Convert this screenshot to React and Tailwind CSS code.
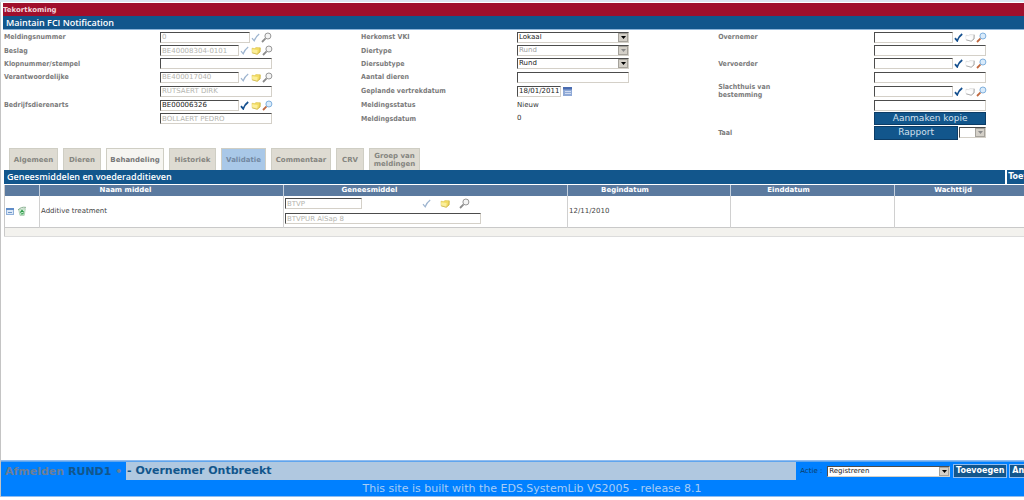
import { useState } from "react";

const ROWS = "grid grid-cols-[156px_1fr] grid-rows-[14px_13px_13px_14px_14px_14px_13px_15px] items-center";
const FIELD =
  "h-[11px] border border-t-[#4c4c4c] border-l-[#4c4c4c] border-r-[#d4d0c8] border-b-[#d4d0c8] bg-white px-px font-[Verdana,'DejaVu_Sans',sans-serif] text-[7px] leading-none outline-none";

function CheckIcon({ muted }) {
  return (
    <svg viewBox="0 0 9 9" className="h-[9px] w-[9px]" fill="none" stroke={muted ? "#9db4cf" : "#15508f"} strokeWidth={muted ? 1.2 : 1.8}>
      <path d="M1 5.2 L3.2 7.8 C4 5.5 5.5 3 8.2 1" />
    </svg>
  );
}

function FolderIcon({ empty }) {
  return (
    <svg viewBox="0 0 10 9" className="h-[9px] w-[10px]">
      <path
        d="M1 2.2 L3.6 2.6 L5 1.6 L9.2 1.8 L9 6 L6.2 8.2 L1.2 6.8 Z"
        fill={empty ? "#fafafa" : "#f3dc62"}
        stroke={empty ? "#d0d0d0" : "#dcc350"}
        strokeWidth="0.6"
      />
      <path d="M1.2 3.2 L6.6 4 L6.2 8.2 L1.2 6.8 Z" fill={empty ? "#ffffff" : "#fbef9a"} />
      <path d="M1.2 6.8 L6.2 8.2 L9 6 L9.2 1.8" fill="none" stroke={empty ? "#8f8f8f" : "#c9b24a"} strokeWidth="0.7" />
    </svg>
  );
}

function SearchIcon({ muted }) {
  return (
    <svg viewBox="0 0 11 11" className="h-[11px] w-[11px]" fill="none">
      <path d="M1 10 L4.6 6.4" stroke={muted ? "#8b8b8b" : "#c0683f"} strokeWidth="1.8" />
      <circle cx="6.9" cy="4" r="3" fill={muted ? "#f4f4f4" : "#d9ebfb"} stroke={muted ? "#969696" : "#7fb0de"} strokeWidth="1" />
    </svg>
  );
}

function Label({ htmlFor, children }) {
  return (
    <label htmlFor={htmlFor} className="font-['DejaVu_Sans_Condensed','DejaVu_Sans',sans-serif] text-[7px] leading-[8px] font-bold text-[#7b7b7b]">
      {children}
    </label>
  );
}

function TextField({ id, value = "", disabled, className = "w-[112px]", label }) {
  const [text, setText] = useState(value);
  return (
    <input
      id={id}
      aria-label={label}
      value={text}
      disabled={disabled}
      onChange={(e) => setText(e.target.value)}
      className={`${FIELD} ${className} ${disabled ? "text-[#b4b4ae]" : "text-[#222222]"}`}
    />
  );
}

function Lookup({ id, value, disabled, muted, noFolder, emptyFolder }) {
  return (
    <div className="flex items-center">
      <TextField id={id} value={value} disabled={disabled} className={noFolder ? "w-[90px]" : "w-[79px]"} />
      <div className="ml-px flex items-center gap-px">
        <button type="button" aria-label="Controleren">
          <CheckIcon muted={muted} />
        </button>
        {!noFolder && (
          <button type="button" aria-label="Openen" className="ml-px">
            <FolderIcon empty={emptyFolder} />
          </button>
        )}
        <button type="button" aria-label="Zoeken">
          <SearchIcon muted={muted} />
        </button>
      </div>
    </div>
  );
}

function Select({ id, label, options, disabled, className }) {
  return (
    <div className={`relative ${className}`}>
      <select
        id={id}
        aria-label={label}
        disabled={disabled}
        className={`block w-full appearance-none ${FIELD} ${disabled ? "text-[#a0a0a0]" : "text-[#222222]"}`}
      >
        {options.map((o) => (
          <option key={o}>{o}</option>
        ))}
      </select>
      <span className="pointer-events-none absolute top-px right-px bottom-px flex w-[10px] items-center justify-center border border-[#a5a29b] bg-[#d4d0c8]">
        <svg viewBox="0 0 5 3" className="h-[3px] w-[5px]" fill={disabled ? "#8a8a8a" : "#000000"}>
          <path d="M0 0 H5 L2.5 3 Z" />
        </svg>
      </span>
    </div>
  );
}

const tabs = [
  { name: "Algemeen", width: "w-[49px]" },
  { name: "Dieren", width: "w-[38px]" },
  { name: "Behandeling", width: "w-[58px]" },
  { name: "Historiek", width: "w-[47px]" },
  { name: "Validatie", width: "w-[45px]" },
  { name: "Commentaar", width: "w-[60px]" },
  { name: "CRV", width: "w-[28px]" },
  { name: "Groep van meldingen", width: "w-[51px]" },
];

function tabColor(name, active) {
  if (name === active) return "bg-[#f6f5f1] text-[#777777]";
  if (name === "Validatie") return "bg-[#a9c8e8] text-[#7388a3]";
  return "bg-[#dedbd2] text-[#858580]";
}

function NotificationForm() {
  return (
    <form className="grid grid-cols-3 pl-[3px]">
      <div className={ROWS}>
        <Label htmlFor="nummer">Meldingsnummer</Label>
        <Lookup id="nummer" value="0" disabled muted noFolder />
        <Label htmlFor="beslag">Beslag</Label>
        <Lookup id="beslag" value="BE40008304-0101" disabled muted />
        <Label htmlFor="klop">Klopnummer/stempel</Label>
        <TextField id="klop" />
        <Label htmlFor="verantw">Verantwoordelijke</Label>
        <Lookup id="verantw" value="BE400017040" disabled muted />
        <span />
        <TextField value="RUTSAERT DIRK" label="Naam verantwoordelijke" disabled />
        <Label htmlFor="arts">Bedrijfsdierenarts</Label>
        <Lookup id="arts" value="BE00006326" />
        <span />
        <TextField value="BOLLAERT PEDRO" label="Naam dierenarts" disabled />
      </div>

      <div className={ROWS}>
        <Label htmlFor="herkomst">Herkomst VKI</Label>
        <Select id="herkomst" options={["Lokaal"]} className="w-[112px]" />
        <Label htmlFor="diertype">Diertype</Label>
        <Select id="diertype" options={["Rund"]} disabled className="w-[112px]" />
        <Label htmlFor="subtype">Diersubtype</Label>
        <Select id="subtype" options={["Rund"]} className="w-[112px]" />
        <Label htmlFor="aantal">Aantal dieren</Label>
        <TextField id="aantal" />
        <Label htmlFor="vertrek">Geplande vertrekdatum</Label>
        <div className="flex items-center gap-0.5">
          <TextField id="vertrek" value="18/01/2011" className="w-[44px]" />
          <button type="button" aria-label="Kalender">
            <svg viewBox="0 0 9 9" className="h-[9px] w-[9px]">
              <rect width="9" height="9" fill="#8fa9d6" />
              <rect width="9" height="2.5" fill="#4a6cb0" />
              <path d="M2 4.5 H8 M2 6.5 H8" stroke="#dfe8f7" strokeWidth="0.8" />
            </svg>
          </button>
        </div>
        <Label>Meldingsstatus</Label>
        <span className="text-[7px] leading-none text-[#333333]">Nieuw</span>
        <Label>Meldingsdatum</Label>
        <span className="text-[7px] leading-none text-[#333333]">0</span>
      </div>

      <div className={ROWS}>
        <Label htmlFor="overnemer">Overnemer</Label>
        <Lookup id="overnemer" emptyFolder />
        <span />
        <TextField label="Naam overnemer" />
        <Label htmlFor="vervoerder">Vervoerder</Label>
        <Lookup id="vervoerder" emptyFolder />
        <span />
        <TextField label="Naam vervoerder" />
        <Label htmlFor="slachthuis">
          Slachthuis van
          <br />
          bestemming
        </Label>
        <Lookup id="slachthuis" emptyFolder />
        <span />
        <TextField label="Naam slachthuis" />
        <span />
        <button type="button" className="h-[13px] w-[112px] border border-[#0c3c66] bg-[#12568c] text-[9px] leading-none text-[#d3e0ec]">
          Aanmaken kopie
        </button>
        <Label htmlFor="taal">Taal</Label>
        <div className="flex items-center gap-px">
          <button type="button" className="h-[14px] w-[84px] border border-[#0c3c66] bg-[#12568c] text-[9px] leading-none text-[#d3e0ec]">
            Rapport
          </button>
          <Select id="taal" options={[""]} disabled className="w-[27px]" />
        </div>
      </div>
    </form>
  );
}

function TreatmentTable() {
  const th = "border-l border-[#c4d0de] p-0 text-center font-bold first:border-l-0";
  const td = "border-l border-[#d0d0d0] p-0 pl-px first:border-l-0";
  return (
    <table className="w-full table-fixed border-collapse border-l border-[#c9c9c9] text-[7px] leading-none">
      <colgroup>
        <col className="w-[35px]" />
        <col className="w-[244px]" />
        <col className="w-[284px]" />
        <col className="w-[163px]" />
        <col className="w-[164px]" />
        <col />
      </colgroup>
      <thead className="bg-[#5b7a9f] text-white">
        <tr className="h-[11px]">
          <th className={th} />
          <th className={`${th} pr-[72px]`}>Naam middel</th>
          <th className={`${th} pr-[112px]`}>Geneesmiddel</th>
          <th className={`${th} pr-[48px]`}>Begindatum</th>
          <th className={`${th} pr-[48px]`}>Einddatum</th>
          <th className={`${th} pr-[64px]`}>Wachttijd</th>
        </tr>
      </thead>
      <tbody>
        <tr className="h-[31px] border-b border-[#c9c9c9] text-[#444444]">
          <td className={td}>
            <div className="flex items-center gap-[3px]">
              <button type="button" aria-label="Bewerken">
                <svg viewBox="0 0 8 7" className="h-[7px] w-[8px]">
                  <rect x="0.5" y="0.5" width="7" height="6" fill="#dce8f7" stroke="#8fb0da" />
                  <path d="M0 1 H8" stroke="#5f8cc8" strokeWidth="2" />
                  <path d="M2 4.5 H6" stroke="#6f96c8" />
                </svg>
              </button>
              <button type="button" aria-label="Verwijderen">
                <svg viewBox="0 0 10 10" className="h-[10px] w-[10px]" fill="none">
                  <path d="M1.6 3.4 L8.4 2.6 L7.2 9.4 L3 9.4 Z" fill="#d7f0dc" stroke="#8fb996" strokeWidth="0.6" />
                  <path d="M1 4 C3 1.6 6 0.8 9 1.4" stroke="#7da886" strokeWidth="0.9" />
                  <path d="M3.4 6.6 L5 4.4 L6.8 6.4 M6.6 7.6 L3.8 8" stroke="#2c9a48" strokeWidth="1.2" />
                </svg>
              </button>
            </div>
          </td>
          <td className={td}>Additive treatment</td>
          <td className={td}>
            <div className="flex flex-col gap-1">
              <div className="flex h-[11px] items-center">
                <TextField value="BTVP" label="Geneesmiddel code" disabled className="w-[77px]" />
                <div className="ml-[60px] flex items-center gap-[9px]">
                  <button type="button" aria-label="Controleren">
                    <CheckIcon muted />
                  </button>
                  <button type="button" aria-label="Openen">
                    <FolderIcon />
                  </button>
                  <button type="button" aria-label="Zoeken">
                    <SearchIcon muted />
                  </button>
                </div>
              </div>
              <TextField value="BTVPUR AlSap 8" label="Geneesmiddel naam" disabled className="w-[196px]" />
            </div>
          </td>
          <td className={td}>12/11/2010</td>
          <td className={td} />
          <td className={td} />
        </tr>
      </tbody>
      <tfoot>
        <tr className="h-[9px] border-b border-[#dcdcdc] bg-[#f3f2ee]">
          <td colSpan={6} />
        </tr>
      </tfoot>
    </table>
  );
}

export default function App() {
  const [active, setActive] = useState("Behandeling");

  return (
    <div className="flex min-h-screen flex-col overflow-hidden border-t-2 border-[#dbe6f0] bg-white pb-[3px] font-[Verdana,'DejaVu_Sans',sans-serif]">
      <div className="flex w-[105%] flex-1 flex-col border-l border-[#c4c4c4]">
        <header className="pt-px pl-0.5">
          <div className="h-[13px] bg-[#a00f2c] text-[7px] leading-[14px] font-bold text-[#f2d5da]">Tekortkoming</div>
          <h1 className="h-[14px] border-b border-[#8db4d8] bg-[#12568c] pl-[3px] font-['Open_Sans',sans-serif] text-[9px] leading-[13px] font-semibold text-white">
            Maintain FCI Notification
          </h1>
        </header>

        <NotificationForm />

        <nav className="mt-2 flex h-[22px] gap-[5px] pl-2">
          {tabs.map((tab) => (
            <button
              key={tab.name}
              type="button"
              onClick={() => setActive(tab.name)}
              className={`border border-b-0 border-[#cfcec4] text-[7px] leading-[8px] font-bold ${tab.width} ${tabColor(tab.name, active)}`}
            >
              {tab.name}
            </button>
          ))}
        </nav>

        <main className="flex-1 pl-[3px]">
          <div className="flex h-[15px] border-b border-white bg-[#12568c] text-white">
            <h2 className="flex-1 pl-[3px] font-['Open_Sans',sans-serif] text-[9px] leading-[14px] font-semibold">
              Geneesmiddelen en voederadditieven
            </h2>
            <button type="button" className="w-[70px] border-l-2 border-white pl-px text-left text-[8px] leading-none font-bold">
              Toevoegen
            </button>
          </div>
          <TreatmentTable />
        </main>

        <footer className="border-t border-b border-[#8fbcf0] bg-[#0080ff]">
          <div className="flex h-[19px] items-center border-t border-[#5fa5ee]">
            <div className="w-[125px] pl-1 text-[11px] leading-none font-bold whitespace-nowrap text-[#12568c]">
              <a href="#afmelden" className="text-[#6c7f96]">
                Afmelden
              </a>{" "}
              RUND1 <span className="text-[#6c7f96]">•</span>
            </div>
            <div className="h-full flex-1 bg-[#b0c8e0] pl-px text-[11px] leading-[18px] font-bold text-[#12568c]">
              - Overnemer Ontbreekt
            </div>
            <div className="flex w-[279px] items-center pl-1">
              <label htmlFor="actie" className="w-[27px] text-[7px] whitespace-nowrap text-[#0c3c66]">
                Actie :
              </label>
              <Select id="actie" options={["Registreren"]} className="w-[123px]" />
              <button type="button" className="ml-[3px] h-[14px] w-[54px] border border-[#8fbcf0] bg-[#12568c] text-[8px] leading-none font-bold text-white">
                Toevoegen
              </button>
              <button type="button" className="ml-0.5 h-[14px] flex-1 border border-[#8fbcf0] bg-[#12568c] pl-0.5 text-left text-[8px] leading-none font-bold text-white">
                Annuleren
              </button>
            </div>
          </div>
          <p className="h-[16px] pr-3 text-center text-[11px] leading-[17px] text-[#a9cdf5]">
            This site is built with the EDS.SystemLib VS2005 - release 8.1
          </p>
        </footer>
      </div>
    </div>
  );
}
